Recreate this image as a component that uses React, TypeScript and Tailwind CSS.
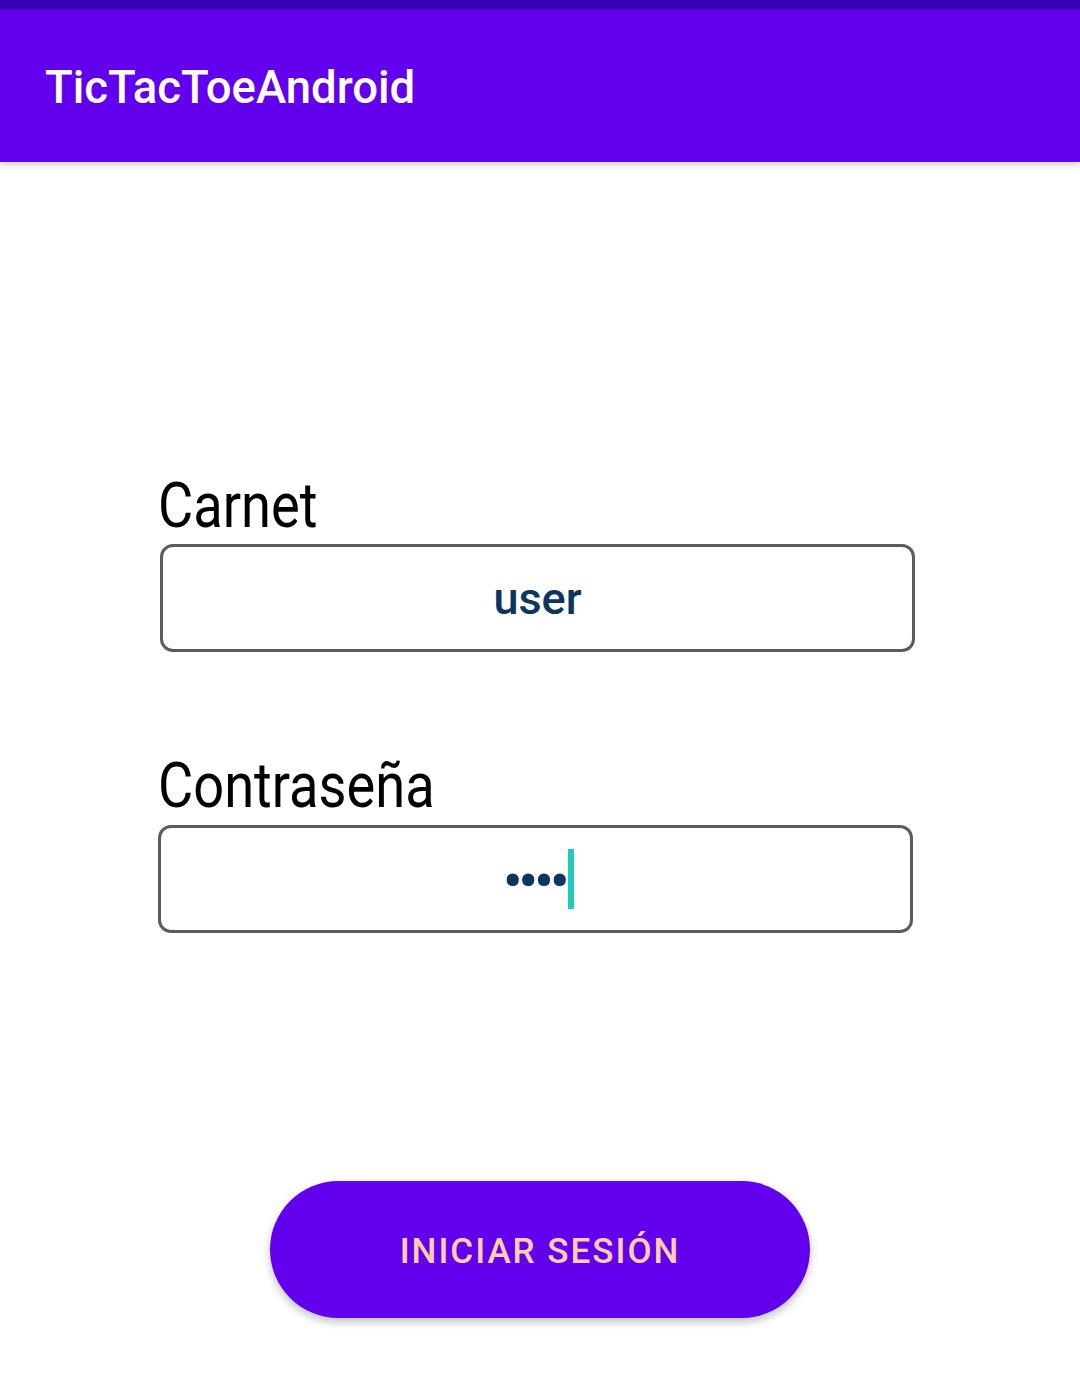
export default function App() {
  return (
    <div className="w-[1080px] h-[1386px] bg-white overflow-hidden font-['Roboto',sans-serif]">
      <div className="h-[9px] bg-[#3700B3]" />
      <header className="relative h-[153px] bg-[#6200EE] flex items-center pl-[45px] pt-[4px] shadow-[0_3px_6px_rgba(0,0,0,0.18)]">
        <h1 className="text-[45.5px] leading-none font-medium text-white">TicTacToeAndroid</h1>
      </header>

      <main className="flex flex-col">
        <label className="mt-[312px] ml-[158px] text-[63px] leading-none text-black origin-left scale-x-86 w-fit">
          Carnet
        </label>
        <div className="mt-[7px] ml-[160px] w-[755px] h-[108px] border-[3px] border-[#5c5c5c] rounded-[13px] flex items-center justify-center">
          <span className="text-[45px] font-medium text-[#0d3561] leading-none">user</span>
        </div>

        <label className="mt-[102px] ml-[158px] text-[63px] leading-none text-black origin-left scale-x-86 w-fit">
          Contraseña
        </label>
        <div className="mt-[8px] ml-[158px] w-[755px] h-[108px] border-[3px] border-[#5c5c5c] rounded-[13px] flex items-center justify-center">
          <div className="flex items-center pl-[6px]">
            <span className="mt-[5px] text-[52px] font-bold text-[#0d3561] leading-none tracking-[-3px]">••••</span>
            <span className="ml-[2px] w-[6px] h-[60px] bg-[#1fcbbd]" />
          </div>
        </div>

        <div className="mt-[248px] flex justify-center">
          <button className="w-[540px] h-[137px] rounded-full bg-[#6200EE] shadow-[0_4px_8px_rgba(0,0,0,0.25)] flex items-center justify-center pt-[3px]">
            <span className="text-[35px] font-medium tracking-[2px] text-[#FFCFA8] leading-none">INICIAR SESIÓN</span>
          </button>
        </div>
      </main>
    </div>
  );
}
